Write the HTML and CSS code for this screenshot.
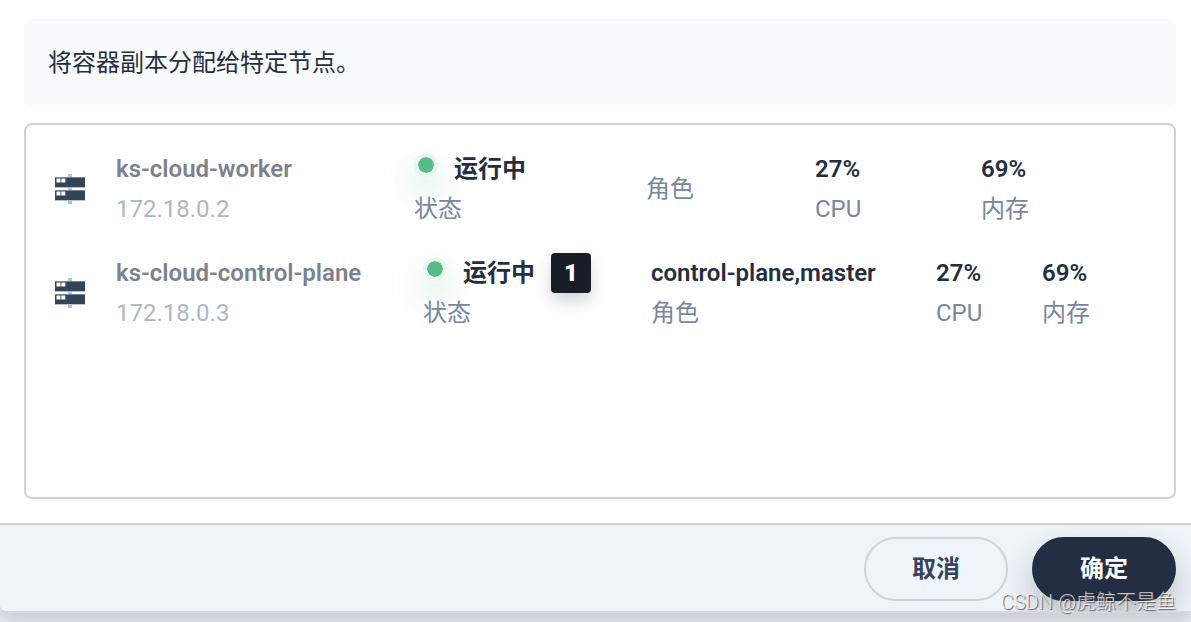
FILE: index.html
```
<!DOCTYPE html>
<html lang="zh-CN">
<head>
<meta charset="utf-8">
<title>分配节点</title>
<link rel="stylesheet" href="styles.css">
</head>
<body>
<div class="modal">
  <main class="content">
    <p class="notice">将容器副本分配给特定节点。</p>
    <ul class="nodes">
      <li class="node node-worker">
        <svg class="node-icon" viewBox="0 0 40 40" aria-hidden="true">
          <path fill="#b6c2cd" d="M18 5h4v4h-4zM18 18h4v4h-4zM18 31h4v4h-4zM5 8h30v11H5zM5 21h30v11H5z"/>
          <path fill="#324558" d="M5 8.500h30v9.500H5zM5 21.500h30v9.500H5z"/>
          <path fill="#fff" d="M6.500 9.500h4v4h-4zM11.300 9.500h4v4h-4zM6.500 22.500h4v4h-4zM11.300 22.500h4v4h-4z"/>
        </svg>
        <div class="cell identity"><strong>ks-cloud-worker</strong><span>172.18.0.2</span></div>
        <div class="cell"><strong class="status"><i class="dot"></i>运行中</strong><span>状态</span></div>
        <div class="cell"><span>角色</span></div>
        <div class="cell"><strong>27%</strong><span>CPU</span></div>
        <div class="cell"><strong>69%</strong><span>内存</span></div>
      </li>
      <li class="node node-control">
        <svg class="node-icon" viewBox="0 0 40 40" aria-hidden="true">
          <path fill="#b6c2cd" d="M18 5h4v4h-4zM18 18h4v4h-4zM18 31h4v4h-4zM5 8h30v11H5zM5 21h30v11H5z"/>
          <path fill="#324558" d="M5 8.500h30v9.500H5zM5 21.500h30v9.500H5z"/>
          <path fill="#fff" d="M6.500 9.500h4v4h-4zM11.300 9.500h4v4h-4zM6.500 22.500h4v4h-4zM11.300 22.500h4v4h-4z"/>
        </svg>
        <div class="cell identity"><strong>ks-cloud-control-plane</strong><span>172.18.0.3</span></div>
        <div class="cell"><strong class="status"><i class="dot"></i>运行中<b class="taint">1</b></strong><span>状态</span></div>
        <div class="cell"><strong>control-plane,master</strong><span>角色</span></div>
        <div class="cell"><strong>27%</strong><span>CPU</span></div>
        <div class="cell"><strong>69%</strong><span>内存</span></div>
      </li>
    </ul>
  </main>
  <footer class="footer">
    <button class="button" type="button">取消</button>
    <button class="button primary" type="button">确定</button>
  </footer>
</div>
<div class="watermark">CSDN @虎鲸不是鱼</div>
</body>
</html>
```
FILE: styles.css
```
* { box-sizing: border-box; }
body {
  margin: 0;
  min-height: 100vh;
  overflow: hidden;
  position: relative;
  background: #e8e9eb;
  color: #242e42;
  font: 24px/40px Roboto, "Noto Sans CJK SC", sans-serif;
}
.modal {
  overflow: hidden;
  background: #fff;
  border-bottom: 2px solid #d3d9e2;
  border-radius: 0 0 0 8px;
  box-shadow: 0 8px 16px rgba(36, 46, 66, .15);
}
.content { padding: 19px 15px 24px 24px; }
.notice {
  margin: 0 0 16px;
  padding: 24px;
  border-radius: 8px;
  background: #f9fbfd;
}
.nodes {
  min-height: 376px;
  margin: 0;
  padding: 24px;
  border: 2px solid #ccd3db;
  border-radius: 8px;
  list-style: none;
  display: flex;
  flex-direction: column;
  gap: 24px;
}
.node {
  display: grid;
  align-items: center;
  min-height: 80px;
}
.node-worker { grid-template-columns: 66px 298fr 232fr 169fr 166fr 169fr; }
.node-control { grid-template-columns: 66px 307fr 228fr 285fr 106fr 108fr; }
.node-icon { width: 40px; height: 40px; }
.cell {
  display: flex;
  flex-direction: column;
  min-width: 0;
  white-space: nowrap;
  color: #79879c;
}
.cell strong { font-weight: 600; color: #242e42; }
.identity { opacity: .6; }
.status { display: flex; }
.dot {
  width: 24px;
  height: 24px;
  margin: 4px 16px 0 0;
  border: 4px solid #e9f6f0;
  border-radius: 50%;
  background: #55bc8a;
  background-clip: padding-box;
  box-shadow: 0 16px 32px rgba(85, 188, 138, .36);
}
.taint {
  width: 40px;
  height: 40px;
  margin-left: 16px;
  border-radius: 4px;
  background: #181d28;
  box-shadow: 0 8px 16px rgba(36, 46, 66, .2);
  color: #fff;
  text-align: center;
}
.footer {
  display: flex;
  justify-content: flex-end;
  gap: 24px;
  padding: 12px 15px 10px;
  border-top: 2px solid #ccd3db;
  background: #eff4f9;
}
.button {
  width: 144px;
  height: 64px;
  border: 2px solid #ccd3db;
  border-radius: 32px;
  background: transparent;
  color: #36435c;
  font: inherit;
  font-weight: 700;
}
.primary {
  border-color: #242e42;
  background: #242e42;
  box-shadow: 0 16px 32px rgba(36, 46, 66, .28);
  color: #fff;
}
.watermark {
  position: absolute;
  right: 15px;
  bottom: 8px;
  color: rgba(255, 255, 255, .75);
  font-size: 20px;
  font-weight: 300;
  line-height: 24px;
  text-shadow: 1px 1px 1px #555;
}
```
